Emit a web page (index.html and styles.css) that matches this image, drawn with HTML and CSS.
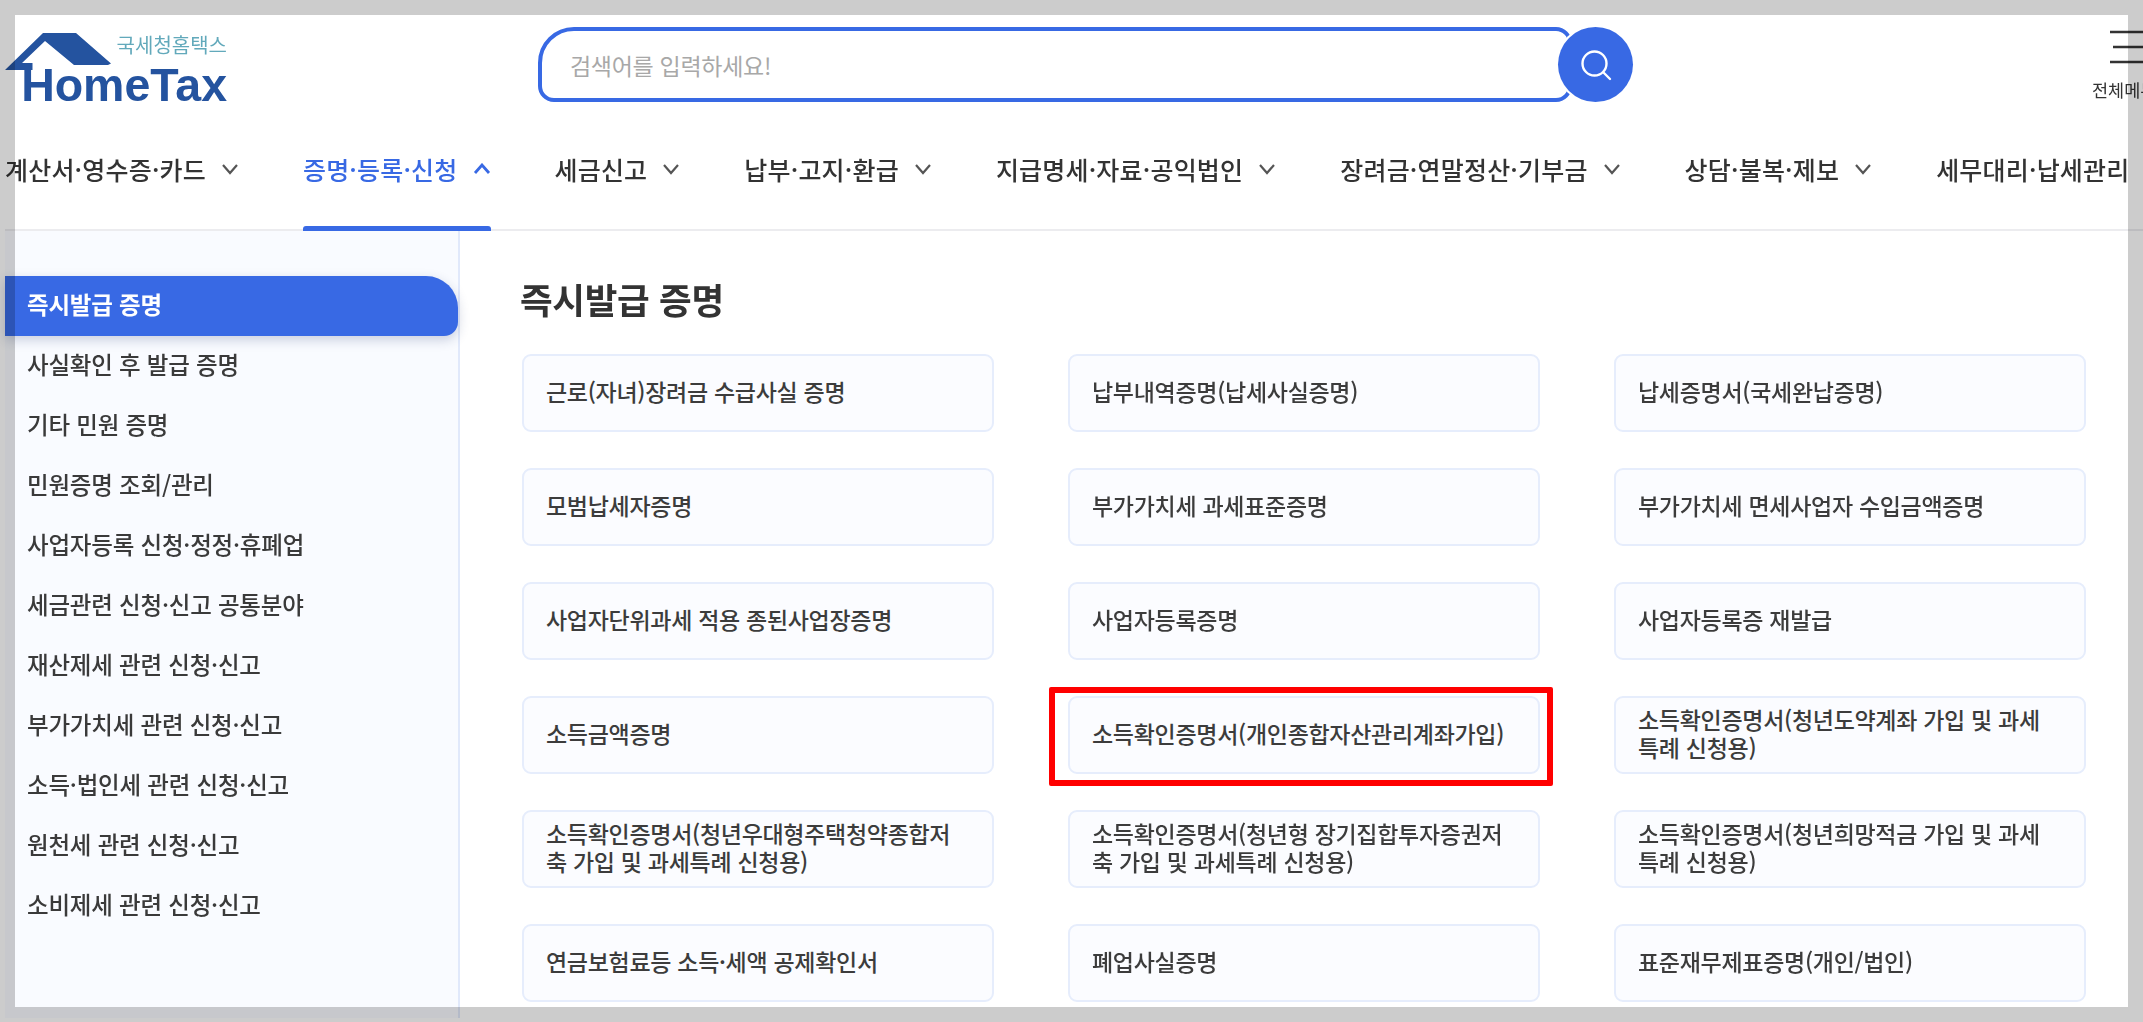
FILE: index.html
```html
<!DOCTYPE html>
<html lang="ko">
<head>
<meta charset="utf-8">
<title>국세청 홈택스</title>
<link rel="stylesheet" href="styles.css">
</head>
<body>
<div class="page">
  <div class="shot">
    <header class="top">
      <a class="logo">
        <svg class="roof" width="120" height="76" viewBox="0 0 120 76"><path d="M0 64 38 27H71L106 57.500 103 59H69L40 35 17 57H27.500V64Z" fill="#24539f"/></svg>
        <span class="logo-sub">국세청홈택스</span>
        <span class="logo-main">HomeTax</span>
      </a>
      <form class="search">
        <div class="search-box"><span class="placeholder">검색어를 입력하세요!</span></div>
        <button class="search-btn" type="button" aria-label="검색">
          <svg width="32" height="32" viewBox="0 0 32 32" fill="none" stroke="#fff" stroke-width="2.400" stroke-linecap="round"><circle cx="14.500" cy="14.500" r="12"/><path d="M23.500 23.500 30 30"/></svg>
        </button>
      </form>
      <div class="allmenu">
        <svg width="40" height="34" viewBox="0 0 40 34" fill="none" stroke="#333" stroke-width="2.400"><path d="M0 2H40M3 17H40M0 32H40"/></svg>
        <span>전체메뉴</span>
      </div>
    </header>
    <nav class="gnb">
      <a class="gnb-item">계산서·영수증·카드<svg class="chev" viewBox="0 0 18 12"><path d="M2 2 9 10 16 2"/></svg></a>
      <a class="gnb-item on">증명·등록·신청<svg class="chev" viewBox="0 0 18 12"><path d="M2 10 9 2 16 10"/></svg></a>
      <a class="gnb-item">세금신고<svg class="chev" viewBox="0 0 18 12"><path d="M2 2 9 10 16 2"/></svg></a>
      <a class="gnb-item">납부·고지·환급<svg class="chev" viewBox="0 0 18 12"><path d="M2 2 9 10 16 2"/></svg></a>
      <a class="gnb-item">지급명세·자료·공익법인<svg class="chev" viewBox="0 0 18 12"><path d="M2 2 9 10 16 2"/></svg></a>
      <a class="gnb-item">장려금·연말정산·기부금<svg class="chev" viewBox="0 0 18 12"><path d="M2 2 9 10 16 2"/></svg></a>
      <a class="gnb-item">상담·불복·제보<svg class="chev" viewBox="0 0 18 12"><path d="M2 2 9 10 16 2"/></svg></a>
      <a class="gnb-item">세무대리·납세관리</a>
    </nav>
    <div class="body">
      <aside class="side">
        <a class="side-item active">즉시발급 증명</a>
        <a class="side-item">사실확인 후 발급 증명</a>
        <a class="side-item">기타 민원 증명</a>
        <a class="side-item">민원증명 조회/관리</a>
        <a class="side-item">사업자등록 신청·정정·휴폐업</a>
        <a class="side-item">세금관련 신청·신고 공통분야</a>
        <a class="side-item">재산제세 관련 신청·신고</a>
        <a class="side-item">부가가치세 관련 신청·신고</a>
        <a class="side-item">소득·법인세 관련 신청·신고</a>
        <a class="side-item">원천세 관련 신청·신고</a>
        <a class="side-item">소비제세 관련 신청·신고</a>
      </aside>
      <main class="main">
        <h1 class="title">즉시발급 증명</h1>
        <div class="cards">
          <a class="card">근로(자녀)장려금 수급사실 증명</a>
          <a class="card">납부내역증명(납세사실증명)</a>
          <a class="card">납세증명서(국세완납증명)</a>
          <a class="card">모범납세자증명</a>
          <a class="card">부가가치세 과세표준증명</a>
          <a class="card">부가가치세 면세사업자 수입금액증명</a>
          <a class="card">사업자단위과세 적용 종된사업장증명</a>
          <a class="card">사업자등록증명</a>
          <a class="card">사업자등록증 재발급</a>
          <a class="card">소득금액증명</a>
          <a class="card marked">소득확인증명서(개인종합자산관리계좌가입)<span class="redbox"></span></a>
          <a class="card">소득확인증명서(청년도약계좌 가입 및 과세특례 신청용)</a>
          <a class="card">소득확인증명서(청년우대형주택청약종합저축 가입 및 과세특례 신청용)</a>
          <a class="card">소득확인증명서(청년형 장기집합투자증권저축 가입 및 과세특례 신청용)</a>
          <a class="card">소득확인증명서(청년희망적금 가입 및 과세특례 신청용)</a>
          <a class="card">연금보험료등 소득·세액 공제확인서</a>
          <a class="card">폐업사실증명</a>
          <a class="card">표준재무제표증명(개인/법인)</a>
        </div>
      </main>
    </div>
  </div>
  <div class="frame"></div>
</div>
</body>
</html>
```
FILE: styles.css
```css
* { box-sizing: border-box; }
html, body { margin: 0; padding: 0; background: #fff; }
body { font-family: "Noto Sans CJK KR", "Noto Sans", sans-serif; color: #333; }
.page { position: relative; width: 2143px; height: 1022px; overflow: hidden; }
.shot { width: 2143px; height: 1018px; padding: 10px 0 0 5px; overflow: hidden; filter: blur(0.5px); }
.frame { position: absolute; left: 0; top: 0; width: 2143px; height: 1022px; border: 15px solid rgba(0, 0, 0, 0.2); }

.top { display: flex; align-items: flex-start; height: 120px; }
.logo { position: relative; display: flex; flex-direction: column; align-items: flex-end; width: 225px; padding-top: 22px; flex: none; }
.roof { position: absolute; left: 0; top: -4px; }
.logo-sub { font-size: 20px; line-height: 26px; color: #62a9bb; padding-right: 3px; }
.logo-main { font-family: "Liberation Sans", sans-serif; font-weight: 700; font-size: 46.500px; line-height: 36px; color: #24539f; padding-right: 3px; margin-top: 9px; }

.search { display: flex; align-items: center; margin-left: 308px; margin-top: 17px; flex: none; }
.search-box { width: 1034px; height: 75px; border: 4px solid #3869e4; border-radius: 36px 16px 16px 16px; display: flex; align-items: center; padding-left: 28px; background: #fff; }
.placeholder { font-size: 23px; color: #a8a8a8; letter-spacing: -0.300px; }
.search-btn { width: 75px; height: 75px; border-radius: 50%; border: 0; padding: 0; background: #3869e4; margin-left: -14px; display: flex; align-items: center; justify-content: center; position: relative; box-shadow: 0 0 0 2px #fff; }

.allmenu { display: flex; flex-direction: column; align-items: flex-start; margin-left: 460px; margin-top: 20px; flex: none; width: 70px; }
.allmenu svg { margin-left: 17px; }
.allmenu span { font-size: 17.500px; line-height: 28px; color: #333; white-space: nowrap; margin-top: 12px; margin-left: -1px; }

.gnb { display: flex; height: 101px; border-bottom: 2px solid #ececef; margin-right: -20px; gap: 64px; }
.gnb-item { position: relative; display: flex; align-items: center; gap: 15px; height: 100px; font-size: 25px; font-weight: 500; color: #333; white-space: nowrap; letter-spacing: 0.200px; padding-bottom: 22px; flex: none; }
.gnb-item.on { color: #3869e4; }
.gnb-item.on::after { content: ""; position: absolute; left: 0; right: 0; bottom: -1px; height: 5px; background: #3869e4; border-radius: 3px 3px 0 0; }
.chev { width: 18px; height: 12px; fill: none; stroke: #555; stroke-width: 2.200; }
.gnb-item.on .chev { stroke: #3869e4; stroke-width: 2.800; }

.body { display: flex; height: 787px; }
.side { width: 455px; flex: none; background: #f9fbff; border-right: 2px solid #e1e9fb; padding-top: 45px; display: flex; flex-direction: column; }
.side-item { display: flex; align-items: center; height: 60px; padding: 0 0 4px 22px; font-size: 23.500px; font-weight: 500; color: #3a3a3a; flex: none; letter-spacing: -0.200px; }
.side-item.active { width: 453px; background: #3869e4; color: #fff; font-weight: 700; border-radius: 0 32px 14px 0; box-shadow: 0 4px 12px rgba(30, 50, 110, 0.22); }

.main { flex: 1; padding: 0 0 0 62px; }
.title { margin: 45px 0 0 -2px; font-size: 35.500px; font-weight: 700; line-height: 46px; color: #333; letter-spacing: -0.300px; }
.cards { display: grid; grid-template-columns: repeat(3, 472px); grid-auto-rows: 78px; column-gap: 74px; row-gap: 36px; margin-top: 32px; }
.card { position: relative; display: flex; align-items: center; padding: 0 31px 4px 22px; background: #fbfcff; border: 2px solid #e6edfc; border-radius: 9px; font-size: 23px; line-height: 28px; font-weight: 500; color: #3c3c3c; letter-spacing: -0.300px; word-break: break-all; }
.redbox { position: absolute; left: -21px; right: -15px; top: -11px; bottom: -14px; border: 6px solid #f00; border-radius: 2px; }
```
